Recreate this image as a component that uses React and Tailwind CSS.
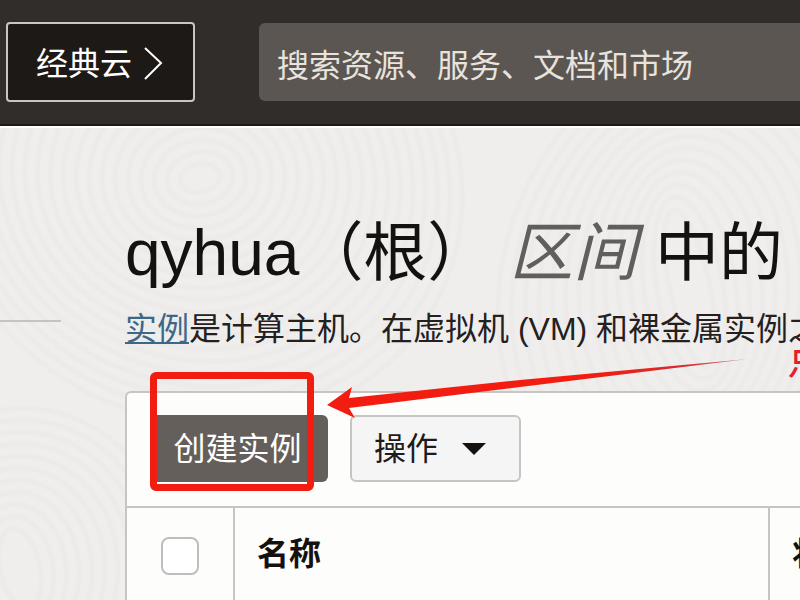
import React, { useState } from 'react';

const columns = ['名称', '状态'];

// faint wood-grain rings behind the page content
const rings = [
  { cx: 200, cy: 50, rx: 20, ry: 14, count: 20 },
  { cx: 690, cy: 160, rx: 20, ry: 80, count: 14 },
  { cx: 20, cy: 440, rx: 20, ry: 40, count: 11 },
];

const GrainBackground = () => (
  <svg
    className="absolute inset-0 h-full w-full pointer-events-none"
    fill="none"
    stroke="#ecebea"
    strokeWidth="5"
    aria-hidden="true"
  >
    {rings.map((r) =>
      Array.from({ length: r.count }, (_, i) => (
        <ellipse
          key={`${r.cx}-${i}`}
          cx={r.cx}
          cy={r.cy}
          rx={r.rx + i * 13}
          ry={r.ry + i * 12}
          transform={`rotate(${i * 2 - 12} ${r.cx} ${r.cy})`}
        />
      ))
    )}
  </svg>
);

const Header = () => {
  const [query, setQuery] = useState('');

  return (
    <header className="flex items-start gap-16 bg-[#312d2a] border-b-2 border-[#1c1917] pt-[22px] pb-[22px] pl-[6px]">
      <button
        type="button"
        className="flex h-20 w-[189px] shrink-0 items-center gap-[10px] rounded border-2 border-[#c9c6c2] bg-[#1d1916] pl-7 pt-1 text-[32px] leading-10 text-white"
      >
        <span>经典云</span>
        <svg width="22" height="36" viewBox="0 0 22 36" fill="none" stroke="currentColor" strokeWidth="2">
          <path d="M3 2L19 17L3 33" />
        </svg>
      </button>
      <input
        type="search"
        aria-label="搜索"
        value={query}
        onChange={(e) => setQuery(e.target.value)}
        placeholder="搜索资源、服务、文档和市场"
        className="mt-px h-[78px] min-w-0 flex-1 rounded-l-md bg-[#5b5652] pl-[18px] pt-2 text-[32px] text-white placeholder:text-[#e8e3dc] placeholder:opacity-100 outline-none"
      />
    </header>
  );
};

// red marker box and arrow that point out the create button
const Callout = () => (
  <>
    <div className="absolute left-[23px] -top-[21px] h-[119px] w-[164px] rounded-md border-[7px] border-[#f21d10] pointer-events-none" />
    <svg
      className="absolute left-[200px] -top-[40px] pointer-events-none"
      width="430"
      height="66"
      viewBox="0 0 430 66"
      aria-hidden="true"
    >
      <defs>
        <linearGradient id="arrowFade" x1="0" x2="1" y1="0" y2="0">
          <stop offset="0.6" stopColor="#f21d10" />
          <stop offset="0.85" stopColor="#d92a2c" />
          <stop offset="1" stopColor="#c98a94" />
        </linearGradient>
      </defs>
      <path d="M0 52L25 34L22 45L193 27L421 6L193 34L22 55L28 65Z" fill="url(#arrowFade)" />
    </svg>
    <span className="absolute left-[660px] -top-[54px] whitespace-nowrap text-[44px] leading-10 text-[#e0202a] pointer-events-none">
      点击
    </span>
  </>
);

const Toolbar = () => (
  <div className="relative flex gap-[22px] pl-6 pt-[22px] pb-6">
    <button
      type="button"
      className="h-[67px] w-[177px] rounded-md bg-[#645f5b] pr-1 text-[32px] leading-10 text-white"
    >
      创建实例
    </button>
    <button
      type="button"
      className="flex h-[67px] w-[171px] items-center gap-6 rounded-md border-2 border-[#c6c5c4] bg-[#f6f5f5] pl-[22px] text-[32px] leading-10 text-[#1e1b1a]"
    >
      <span>操作</span>
      <svg width="24" height="12" viewBox="0 0 24 12" fill="#14110f">
        <path d="M0 0H24L12 12Z" />
      </svg>
    </button>
    <Callout />
  </div>
);

const InstanceTable = () => {
  const [allSelected, setAllSelected] = useState(false);

  return (
    <table className="w-full table-fixed border-collapse">
      <thead>
        <tr className="h-24 border-t-2 border-[#c6c5c4]">
          <th className="w-[107px] border-r-2 border-[#c6c5c4]">
            <input
              type="checkbox"
              aria-label="全选"
              checked={allSelected}
              onChange={(e) => setAllSelected(e.target.checked)}
              className="block mx-auto h-[38px] w-[38px] appearance-none rounded-lg border-2 border-[#bfbebd] bg-white checked:bg-[#645f5b]"
            />
          </th>
          {columns.map((col, i) => (
            <th
              key={col}
              className={`whitespace-nowrap pl-[22px] pb-1 text-left text-[32px] leading-10 font-bold text-[#14110f] ${
                i === 0 ? 'w-[535px] border-r-2 border-[#c6c5c4]' : ''
              }`}
            >
              {col}
            </th>
          ))}
        </tr>
      </thead>
    </table>
  );
};

const App = () => {
  return (
    <div className="flex h-screen flex-col overflow-hidden bg-[#efeeed] font-['Liberation_Sans','Noto_Sans_CJK_SC',sans-serif]">
      <Header />
      <div className="relative flex flex-1 gap-16 border-t-2 border-white">
        <GrainBackground />

        {/* Side menu, only its divider is in view */}
        <aside className="relative w-[61px] shrink-0 pt-48">
          <hr className="border-t-2 border-[#c4c3c2]" />
        </aside>

        <main className="relative min-w-0 flex-1 pt-[85px]">
          <h1 className="whitespace-nowrap text-[64px] leading-20 text-[#14110f]">
            qyhua（根） <em className="text-[#625e5b]">区间</em> 中的
          </h1>
          <p className="mt-3 whitespace-nowrap text-[32px] leading-12 text-[#24201e]">
            <a href="#instances" className="text-[#3c6787] underline decoration-2 underline-offset-2">实例</a>
            是计算主机。在虚拟机 (VM) 和裸金属实例之间
          </p>

          <section className="mt-[38px] rounded-tl-md border-t-2 border-l-2 border-[#c6c5c4] bg-[#fdfdfc]">
            <Toolbar />
            <InstanceTable />
          </section>
        </main>
      </div>
    </div>
  );
};

export default App;
